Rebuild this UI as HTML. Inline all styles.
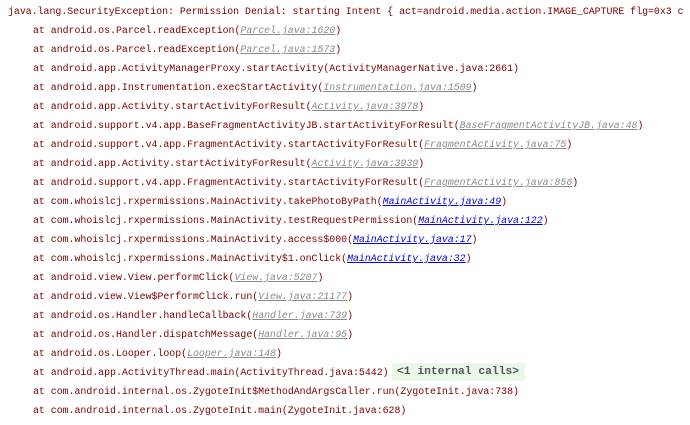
<!DOCTYPE html>
<html><head><meta charset="utf-8"><style>
html,body{margin:0;padding:0;background:#fff;width:690px;height:425px;overflow:hidden}
body{font-family:"Liberation Mono","Noto Sans CJK SC",monospace;font-size:9.9px;color:#7a0000;}
.l{position:absolute;left:8px;white-space:pre;height:19px;line-height:19px}
.i{left:33px}
.g{color:#8a8a8a;font-style:italic;text-decoration:underline}
.b{color:#0000e0;font-style:italic;text-decoration:underline}
.ic{position:absolute;left:359px;top:0;height:18px;line-height:18px;background:#e8f7e8;color:#555;font-weight:bold;font-size:11.3px;padding:0 6px 0 5px}
</style></head><body>
<div style="position:absolute;left:0;top:2px;width:690px;height:423px">
<div class="l" style="top:0">java.lang.SecurityException: Permission Denial: starting Intent { act=android.media.action.IMAGE_CAPTURE flg=0x3 c</div>
<div class="l i" style="top:19px">at android.os.Parcel.readException(<span class="g">Parcel.java:1620</span>)</div>
<div class="l i" style="top:38px">at android.os.Parcel.readException(<span class="g">Parcel.java:1573</span>)</div>
<div class="l i" style="top:57px">at android.app.ActivityManagerProxy.startActivity(ActivityManagerNative.java:2661)</div>
<div class="l i" style="top:76px">at android.app.Instrumentation.execStartActivity(<span class="g">Instrumentation.java:1509</span>)</div>
<div class="l i" style="top:95px">at android.app.Activity.startActivityForResult(<span class="g">Activity.java:3978</span>)</div>
<div class="l i" style="top:114px">at android.support.v4.app.BaseFragmentActivityJB.startActivityForResult(<span class="g">BaseFragmentActivityJB.java:48</span>)</div>
<div class="l i" style="top:133px">at android.support.v4.app.FragmentActivity.startActivityForResult(<span class="g">FragmentActivity.java:75</span>)</div>
<div class="l i" style="top:152px">at android.app.Activity.startActivityForResult(<span class="g">Activity.java:3939</span>)</div>
<div class="l i" style="top:171px">at android.support.v4.app.FragmentActivity.startActivityForResult(<span class="g">FragmentActivity.java:856</span>)</div>
<div class="l i" style="top:190px">at com.whoislcj.rxpermissions.MainActivity.takePhotoByPath(<span class="b">MainActivity.java:49</span>)</div>
<div class="l i" style="top:209px">at com.whoislcj.rxpermissions.MainActivity.testRequestPermission(<span class="b">MainActivity.java:122</span>)</div>
<div class="l i" style="top:228px">at com.whoislcj.rxpermissions.MainActivity.access$000(<span class="b">MainActivity.java:17</span>)</div>
<div class="l i" style="top:247px">at com.whoislcj.rxpermissions.MainActivity$1.onClick(<span class="b">MainActivity.java:32</span>)</div>
<div class="l i" style="top:266px">at android.view.View.performClick(<span class="g">View.java:5207</span>)</div>
<div class="l i" style="top:285px">at android.view.View$PerformClick.run(<span class="g">View.java:21177</span>)</div>
<div class="l i" style="top:304px">at android.os.Handler.handleCallback(<span class="g">Handler.java:739</span>)</div>
<div class="l i" style="top:323px">at android.os.Handler.dispatchMessage(<span class="g">Handler.java:95</span>)</div>
<div class="l i" style="top:342px">at android.os.Looper.loop(<span class="g">Looper.java:148</span>)</div>
<div class="l i" style="top:361px;width:600px">at android.app.ActivityThread.main(ActivityThread.java:5442)<span class="ic">&lt;1 internal calls&gt;</span></div>
<div class="l i" style="top:380px">at com.android.internal.os.ZygoteInit$MethodAndArgsCaller.run(ZygoteInit.java:738)</div>
<div class="l i" style="top:399px">at com.android.internal.os.ZygoteInit.main(ZygoteInit.java:628)</div>
</div>
</body></html>
